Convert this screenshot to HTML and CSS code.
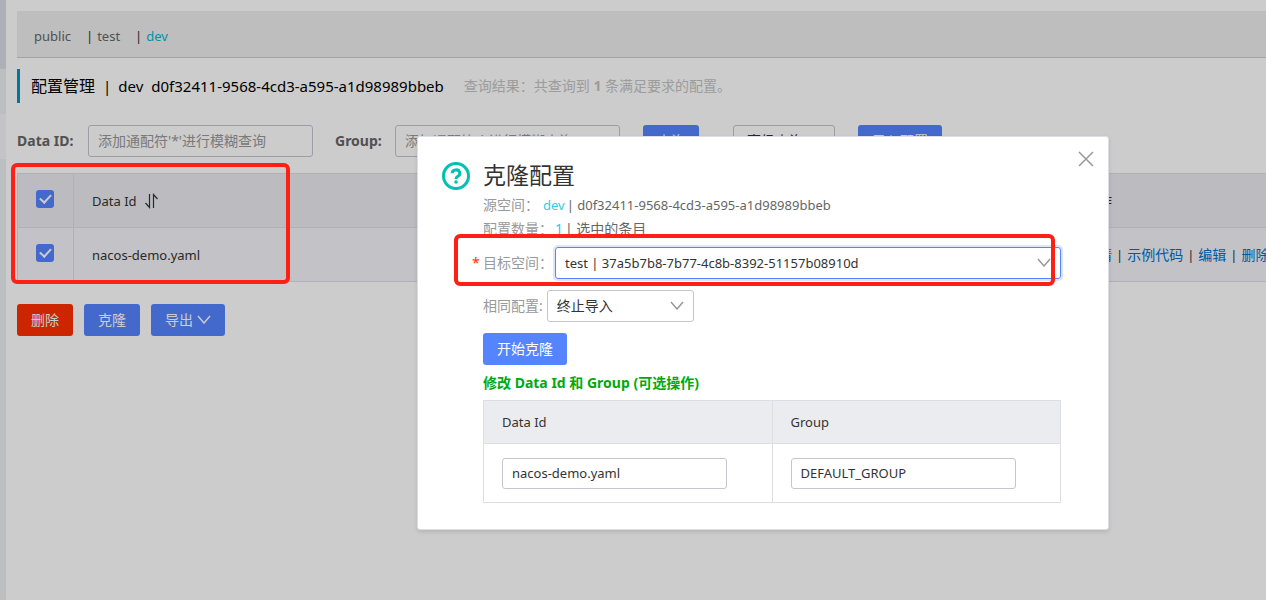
FILE: index.html
```html
<!DOCTYPE html>
<html lang="zh-CN">
<head>
<meta charset="utf-8">
<title>配置管理</title>
<link rel="stylesheet" href="styles.css">
</head>
<body>
<div class="page">
  <aside class="sidebar"><span class="side-head"></span><span class="side-item"></span><span class="side-item active"></span></aside>
  <main class="main">
    <nav class="namespaces">
      <a class="public" href="#">public</a><i>|</i><a class="test" href="#">test</a><i>|</i><a class="current" href="#">dev</a>
    </nav>
    <header class="heading">
      <h1><span class="zh">配置管理</span><i>|</i><span>dev</span><span class="space-id">d0f32411-9568-4cd3-a595-a1d98989bbeb</span></h1>
      <p>查询结果：共查询到 <b>1</b> 条满足要求的配置。</p>
    </header>
    <form class="search">
      <label class="field-label" for="q-id">Data ID:</label>
      <input class="text-input" id="q-id" placeholder="添加通配符'*'进行模糊查询">
      <label class="field-label group-label" for="q-group">Group:</label>
      <input class="text-input" id="q-group" placeholder="添加通配符'*'进行模糊查询">
      <button class="btn query" type="button">查询</button>
      <button class="btn plain" type="button">高级查询<svg class="chevron" viewBox="0 0 14 9"><path d="M1 1l6 7 6-7"/></svg></button>
      <button class="btn import" type="button">导入配置</button>
    </form>
    <div class="list">
      <table class="configs">
        <colgroup><col class="col-check"><col><col class="col-actions"></colgroup>
        <thead><tr>
          <th><input class="check" type="checkbox" checked aria-label="全选"></th>
          <th><span class="sort">Data Id<svg viewBox="0 0 13 16"><path d="M4.500 1v13.500L.5 10M8.500 15V1.500L12.500 6"/></svg></span></th>
          <th class="zh">操作</th>
        </tr></thead>
        <tbody><tr>
          <td><input class="check" type="checkbox" checked aria-label="nacos-demo.yaml"></td>
          <td>nacos-demo.yaml</td>
          <td class="actions"><a href="#">详情</a><i>|</i><a href="#">示例代码</a><i>|</i><a href="#">编辑</a><i>|</i><a href="#">删除</a></td>
        </tr></tbody>
      </table>
      <span class="mark mark-list"></span>
    </div>
    <div class="bulk">
      <button class="btn danger" type="button">删除</button>
      <button class="btn" type="button">克隆</button>
      <button class="btn" type="button">导出<svg class="chevron" viewBox="0 0 14 9"><path d="M1 1l6 7 6-7"/></svg></button>
    </div>
  </main>
  <div class="backdrop"></div>
  <section class="dialog" role="dialog" aria-labelledby="dlg-title">
    <svg class="help" viewBox="0 0 28 28"><circle cx="14" cy="14" r="12.500"/><path d="M10.200 11.300a3.800 3.400 0 1 1 5.600 3c-1.300.7-1.800 1.200-1.800 2.700"/><circle class="dot" cx="14" cy="20" r="1.800"/></svg>
    <button class="close" type="button" aria-label="关闭"><svg viewBox="0 0 16 16"><path d="M1 1l14 14M15 1L1 15"/></svg></button>
    <div class="content">
      <h2 id="dlg-title">克隆配置</h2>
      <p class="info"><span class="muted">源空间：</span><em class="source">dev</em><span class="latin">|&nbsp;d0f32411-9568-4cd3-a595-a1d98989bbeb</span></p>
      <p class="info count"><span class="muted">配置数量：</span><em>1</em><span>|&nbsp;选中的条目</span></p>
      <div class="row target">
        <label class="muted required" for="target">目标空间：</label>
        <span class="select focus"><select id="target"><option>test | 37a5b7b8-7b77-4c8b-8392-51157b08910d</option></select><svg class="chevron" viewBox="0 0 14 9"><path d="M1 1l6 7 6-7"/></svg></span>
        <span class="mark mark-target"></span>
      </div>
      <div class="row policy">
        <label class="muted" for="policy">相同配置:</label>
        <span class="select"><select class="zh" id="policy"><option>终止导入</option></select><svg class="chevron" viewBox="0 0 14 9"><path d="M1 1l6 7 6-7"/></svg></span>
      </div>
      <button class="btn start" type="button">开始克隆</button>
      <h3>修改 Data Id 和 Group (可选操作)</h3>
      <table class="edit">
        <thead><tr><th id="h-id">Data Id</th><th id="h-group">Group</th></tr></thead>
        <tbody><tr>
          <td><input class="text-input" aria-labelledby="h-id" value="nacos-demo.yaml"></td>
          <td><input class="text-input" aria-labelledby="h-group" value="DEFAULT_GROUP"></td>
        </tr></tbody>
      </table>
    </div>
  </section>
</div>
</body>
</html>
```
FILE: styles.css
```css
* { box-sizing: border-box; }
body { margin: 0; font: 13px/20px "Noto Sans", "Noto Sans CJK SC", sans-serif; color: #333; background: #fff; }
h1, h2, h3, p { margin: 0; font-weight: 400; }
i, em { font-style: normal; }
a { color: inherit; text-decoration: none; }
button, input, select { font: inherit; color: inherit; margin: 0; }
svg { fill: none; stroke: currentColor; }
.zh { font-size: 14px; }

.page { position: relative; display: flex; min-height: 100vh; overflow: hidden; }
.sidebar { flex: 0 0 6px; display: flex; flex-direction: column; background: #eaeff3; }
.side-head { height: 69px; background: #d9dde4; }
.side-item { height: 45px; }
.side-item.active { background: #f5f4fa; }
.main { flex: 1; min-width: 0; padding: 11px 0 0 11px; }

.namespaces { display: flex; align-items: center; height: 47px; padding: 4px 17px 0; background: #eee; border-bottom: 1px solid #ccc; color: #666; }
.namespaces i { color: #333; margin-right: 4px; }
.public, .test { margin-right: 15px; }
.namespaces .current { color: #00b7d3; }

.heading { display: flex; align-items: center; gap: 20px; height: 34px; margin-top: 11px; padding-left: 11px; border-left: 3px solid #0096c3; color: #000; }
.heading h1 { display: flex; align-items: center; font-size: 15px; }
.heading h1 .zh { font-size: 16px; }
.heading h1 i { margin: 0 7px 0 8px; }
.space-id { margin-left: 8px; }
.heading p { font-size: 14px; color: #c4c4c4; }

.search { display: flex; align-items: center; margin-top: 22px; }
.field-label { font-size: 14px; font-weight: 700; color: #666; width: 71px; flex: none; }
.group-label { width: 60px; margin-left: 22px; }
.text-input { width: 225px; height: 32px; padding: 0 9px; border: 1px solid #c4c6cf; border-radius: 3px; background: #fff; outline: 0; }
.text-input::placeholder { color: #999; opacity: 1; font-size: 14px; }
.btn { height: 32px; padding: 0 14px; border: 0; border-radius: 3px; background: #5584ff; color: #fff; font-size: 14px; display: inline-flex; align-items: center; flex: none; white-space: nowrap; }
.btn .chevron { margin: 0 0 2px 4px; }
.chevron { width: 14px; height: 9px; flex: none; stroke-width: 1.5; }
.query { margin-left: 23px; }
.plain { margin: 0 23px 0 34px; padding: 0 13px; background: #fff; color: #333; border: 1px solid #c4c6cf; }

.list { position: relative; margin-top: 16px; }
table { border-collapse: collapse; table-layout: fixed; }
th, td { text-align: left; font-weight: 400; border: 1px solid #dcdee3; padding: 0 18px; }
th { background: #ebecf0; }
.configs { width: calc(100% + 34px); }
.configs th, .configs td { height: 54px; border-right-color: transparent; border-left-color: transparent; white-space: nowrap; }
.configs td { background: #f4f3f8; }
.configs tr > :first-child { border-left-color: #dcdee3; border-right-color: #dcdee3; }
.col-check { width: 56px; }
.col-actions { width: 234px; }
.check { appearance: none; width: 18px; height: 18px; margin-bottom: 4px; border-radius: 3px; background: #5584ff; display: grid; place-items: center; }
.check::after { content: ""; width: 9px; height: 5px; border: solid #fff; border-width: 0 0 2px 2px; rotate: -47deg; margin-bottom: 3px; }
.sort { display: flex; align-items: center; gap: 8px; }
.sort svg { width: 13px; height: 16px; stroke-width: 1.2; }
.actions a { font-size: 14px; color: #0070cc; }
.actions i { margin: 0 4px; }

.bulk { display: flex; gap: 11px; margin-top: 22px; }
.danger { background: #ff3000; }

.backdrop { position: absolute; inset: 0; background: rgba(0, 0, 0, .2); }
.dialog { position: absolute; left: 417px; top: 136px; width: 692px; padding: 22px 47px 26px 65px; background: #fff; border: 1px solid #dcdee3; border-radius: 3px; box-shadow: 0 2px 4px rgba(0, 0, 0, .12); }
.help { position: absolute; left: 24px; top: 25px; width: 28px; height: 28px; color: #00c1b2; stroke-width: 3; }
.help .dot { fill: currentColor; stroke: none; }
.close { position: absolute; right: 14px; top: 14px; width: 16px; height: 16px; padding: 0; border: 0; background: none; color: #999; }
.close svg { display: block; width: 16px; height: 16px; stroke-width: 1.5; }
.dialog h2 { font-size: 23px; line-height: 32px; margin-bottom: 2px; }
.info { display: flex; align-items: center; height: 24px; color: #666; }
.info em { color: #2fcde4; margin-right: 2px; }
.info .source { margin-left: 4px; }
.count { font-size: 14px; }
.count em { margin-left: 2px; }
.muted { color: #999; font-size: 14px; white-space: nowrap; }
.row { position: relative; display: flex; align-items: center; }
.target { margin-top: 6px; }
.target label { width: 72px; flex: none; }
.required::before { content: "*"; position: absolute; left: -11px; color: #ff3000; }
.select { position: relative; display: block; height: 32px; width: 147px; border: 1px solid #c4c6cf; border-radius: 3px; }
.select select { appearance: none; width: 100%; height: 100%; padding: 0 32px 0 9px; border: 0; background: none; outline: 0; }
.select .chevron { position: absolute; right: 9px; top: 10px; color: #999; pointer-events: none; }
.select.focus { flex: 1; border-color: #5584ff; box-shadow: 0 0 0 2px #dde6ff; }
.policy { gap: 4px; margin-top: 11px; }
.start { margin-top: 11px; }
.dialog h3 { margin: 8px 0 7px; font-size: 14px; font-weight: 700; color: #00aa0e; }
.edit { width: 100%; }
.edit th { height: 43px; }
.edit td { height: 59px; }
.edit .text-input { display: block; height: 31px; }

.mark { position: absolute; border: 4px solid #ff2015; border-radius: 6px; pointer-events: none; }
.mark-list { left: -6px; top: -10px; width: 279px; height: 121px; z-index: 2; }
.mark-target { left: -29px; right: 6px; top: -13px; bottom: -7px; }
```
